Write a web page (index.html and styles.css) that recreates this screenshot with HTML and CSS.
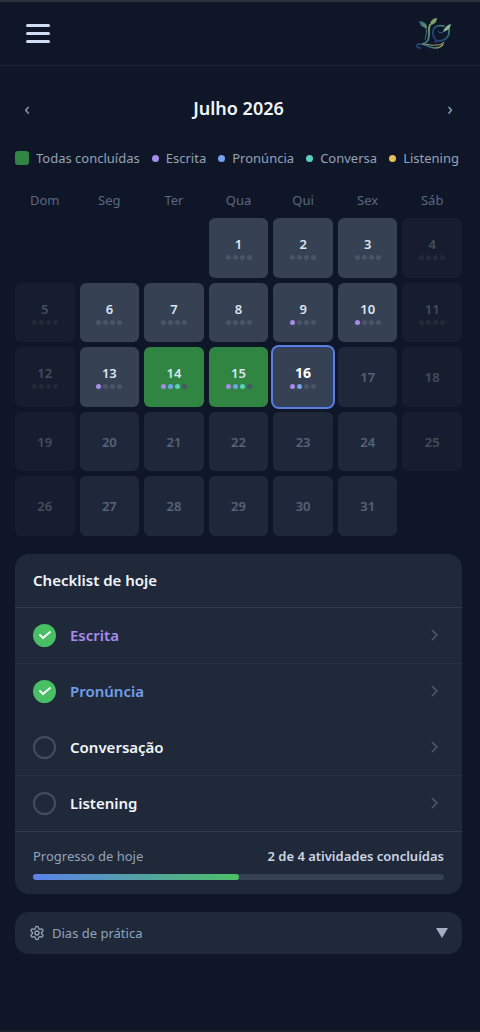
FILE: index.html
```html
<!DOCTYPE html>
<html lang="pt-BR">
<head>
  <meta charset="UTF-8">
  <meta name="viewport" content="width=device-width, initial-scale=1.0">
  <title>Calendário de prática</title>
  <link rel="stylesheet" href="styles.css">
</head>
<body>
  <header class="topbar">
    <button type="button" class="menu-btn" aria-label="Abrir menu">
      <span></span><span></span><span></span>
    </button>
    <a href="#" class="logo" aria-label="Início">
      <svg viewBox="0 0 36 34" width="36" height="34" fill="none" stroke-linecap="round" stroke-linejoin="round">
        <defs>
          <linearGradient id="leaf" x1="0" y1="0" x2="1" y2="1">
            <stop offset="0" stop-color="#2b5f7c"/>
            <stop offset="1" stop-color="#6b9a7c"/>
          </linearGradient>
          <linearGradient id="stem" x1="0" y1="0" x2="0" y2="1">
            <stop offset="0" stop-color="#7f9f6c"/>
            <stop offset="1" stop-color="#2c6a80"/>
          </linearGradient>
          <linearGradient id="root" x1="0" y1="0" x2="1" y2="0">
            <stop offset="0" stop-color="#27457f"/>
            <stop offset="0.5" stop-color="#35737f"/>
            <stop offset="1" stop-color="#b0a86c"/>
          </linearGradient>
          <linearGradient id="bubble" x1="0" y1="1" x2="1" y2="0">
            <stop offset="0" stop-color="#22367a"/>
            <stop offset="0.6" stop-color="#285f78"/>
            <stop offset="1" stop-color="#6b9a7c"/>
          </linearGradient>
        </defs>
        <path d="M11 11C8 11 4 9 3 4c5 0 8 3 8 7z" fill="url(#leaf)"/>
        <path d="M14 8c0-4 3-7 7-7 0 4-3 7-7 7z" fill="#7f9f6c"/>
        <path d="M14 8c-2 4-1 6-1 10 0 5-3 8-6 9" stroke="url(#stem)" stroke-width="2"/>
        <path d="M10 11c1 4 0 8-1 11" stroke="#3b7b83" stroke-width="1"/>
        <path d="M4 31c-4 0-4-4 0-4 6 0 9 4 15 4 4 0 7-2 8-4" stroke="url(#root)" stroke-width="1.6"/>
        <path d="M7 27c5 0 9 2 14 1 3 0 5-1 7-3" stroke="#a39f6b" stroke-width="1"/>
        <path d="M28 9c-5-1-10 0-11 5-1 4 1 7 3 9l-1 2 3-1c7 0 11-4 11-9 0-2 0-4 0-5" stroke="url(#bubble)" stroke-width="1.6"/>
        <path d="M27 15c1-4 4-7 8-8-1 5-4 7-8 8z" fill="#83b89a"/>
        <path d="M22 14l2 2 3-1" stroke="#2f5f9a" stroke-width="1"/>
      </svg>
    </a>
  </header>

  <main class="content">
    <div class="month-nav">
      <button type="button" class="nav-btn" aria-label="Mês anterior">‹</button>
      <h1>Julho 2026</h1>
      <button type="button" class="nav-btn" aria-label="Próximo mês">›</button>
    </div>

    <ul class="legend">
      <li><span class="swatch"></span>Todas concluídas</li>
      <li><span class="key escrita"></span>Escrita</li>
      <li><span class="key pronuncia"></span>Pronúncia</li>
      <li><span class="key conversa"></span>Conversa</li>
      <li><span class="key listening"></span>Listening</li>
    </ul>

    <div class="weekdays">
      <span>Dom</span><span>Seg</span><span>Ter</span><span>Qua</span><span>Qui</span><span>Sex</span><span>Sáb</span>
    </div>
    <div class="days" id="days"></div>

    <section class="card checklist">
      <h2>Checklist de hoje</h2>
      <ul>
        <li>
          <a href="#" class="task">
            <span class="check done"><svg viewBox="0 0 12 12" width="12" height="12"><path d="M1 6l3 3 7-6"/></svg></span>
            <span class="task-name text-escrita">Escrita</span>
            <svg class="chevron" viewBox="0 0 8 12" width="8" height="12"><path d="M1 1l5 5-5 5"/></svg>
          </a>
        </li>
        <li>
          <a href="#" class="task">
            <span class="check done"><svg viewBox="0 0 12 12" width="12" height="12"><path d="M1 6l3 3 7-6"/></svg></span>
            <span class="task-name text-pronuncia">Pronúncia</span>
            <svg class="chevron" viewBox="0 0 8 12" width="8" height="12"><path d="M1 1l5 5-5 5"/></svg>
          </a>
        </li>
        <li class="no-line">
          <a href="#" class="task">
            <span class="check"></span>
            <span class="task-name">Conversação</span>
            <svg class="chevron" viewBox="0 0 8 12" width="8" height="12"><path d="M1 1l5 5-5 5"/></svg>
          </a>
        </li>
        <li>
          <a href="#" class="task">
            <span class="check"></span>
            <span class="task-name">Listening</span>
            <svg class="chevron" viewBox="0 0 8 12" width="8" height="12"><path d="M1 1l5 5-5 5"/></svg>
          </a>
        </li>
      </ul>
      <div class="progress">
        <div class="progress-info">
          <span>Progresso de hoje</span>
          <strong>2 de 4 atividades concluídas</strong>
        </div>
        <div class="bar"><div class="bar-fill" style="width: 50%"></div></div>
      </div>
    </section>

    <button type="button" class="card practice">
      <svg class="gear" viewBox="0 0 24 24" width="16" height="16"><path d="M12.2 2h-.4a2 2 0 0 0-2 2v.2a2 2 0 0 1-1 1.7l-.4.3a2 2 0 0 1-2 0l-.2-.1a2 2 0 0 0-2.7.7l-.2.4a2 2 0 0 0 .7 2.7l.2.1a2 2 0 0 1 1 1.7v.5a2 2 0 0 1-1 1.8l-.2.1a2 2 0 0 0-.7 2.7l.2.4a2 2 0 0 0 2.7.7l.2-.1a2 2 0 0 1 2 0l.4.3a2 2 0 0 1 1 1.7v.2a2 2 0 0 0 2 2h.4a2 2 0 0 0 2-2v-.2a2 2 0 0 1 1-1.7l.4-.3a2 2 0 0 1 2 0l.2.1a2 2 0 0 0 2.7-.7l.2-.4a2 2 0 0 0-.7-2.7l-.2-.1a2 2 0 0 1-1-1.8v-.5a2 2 0 0 1 1-1.7l.2-.1a2 2 0 0 0 .7-2.7l-.2-.4a2 2 0 0 0-2.7-.7l-.2.1a2 2 0 0 1-2 0l-.4-.3a2 2 0 0 1-1-1.7V4a2 2 0 0 0-2-2z"/><circle cx="12" cy="12" r="3"/></svg>
      <span>Dias de prática</span>
      <svg class="caret" viewBox="0 0 12 10" width="12" height="10"><path d="M0 0h12L6 10z"/></svg>
    </button>
  </main>

  <script src="script.js"></script>
</body>
</html>
```
FILE: styles.css
```css
* {
  box-sizing: border-box;
}
body {
  margin: 0;
  min-height: 100vh;
  background-color: #0f1628;
  color: #f1f5f9;
  font-family: 'Noto Sans', 'Open Sans', sans-serif;
  font-size: 13px;
  border-top: 2px solid #2a333e;
  border-bottom: 2px solid #17222c;
}
h1, h2, ul {
  margin: 0;
  padding: 0;
}
ul {
  list-style: none;
}
button {
  font-family: inherit;
  border: none;
  background: none;
  padding: 0;
  cursor: pointer;
}
a {
  color: inherit;
  text-decoration: none;
}

/* topo */
.topbar {
  display: flex;
  justify-content: space-between;
  align-items: center;
  height: 64px;
  padding: 0 28px 0 26px;
  border-bottom: 1px solid #1e283a;
}
.menu-btn {
  display: flex;
  flex-direction: column;
  gap: 5px;
}
.menu-btn span {
  width: 24px;
  height: 3px;
  border-radius: 2px;
  background-color: #cfdcf2;
}
.logo svg {
  display: block;
}

.content {
  padding: 23px 18px 24px 15px;
}

/* mes */
.month-nav {
  display: flex;
  justify-content: space-between;
  align-items: center;
  height: 38px;
}
.month-nav h1 {
  font-size: 18px;
  font-weight: 600;
}
.nav-btn {
  width: 24px;
  height: 38px;
  color: #94a3b8;
  font-size: 18px;
}

/* legenda */
.legend {
  display: flex;
  justify-content: space-between;
  margin-top: 21px;
  padding-right: 3px;
  color: #94a3b8;
  line-height: 20px;
}
.legend li {
  display: flex;
  align-items: center;
  gap: 7px;
}
.swatch {
  width: 14px;
  height: 14px;
  border-radius: 3px;
  background-color: #2f8541;
}
.key {
  width: 7px;
  height: 7px;
  border-radius: 50%;
}

/* calendario */
.weekdays,
.days {
  display: grid;
  grid-template-columns: repeat(7, 1fr);
  gap: 5px;
}
.weekdays {
  margin-top: 22px;
  line-height: 20px;
  text-align: center;
  color: #5b6880;
}
.days {
  margin-top: 8px;
}
.day {
  display: flex;
  flex-direction: column;
  align-items: center;
  justify-content: center;
  gap: 2px;
  aspect-ratio: 1;
  border-radius: 6px;
  background-color: #364153;
  color: #dbe5f3;
  font-size: 13px;
  font-weight: 600;
  line-height: 18px;
}
.first {
  grid-column-start: 4;
}
.future {
  background-color: #1e283a;
  color: #586375;
}
.off {
  background-color: #161d2e;
  color: #454d5d;
}
.complete {
  background-color: #2f8541;
}
.today {
  color: #fff;
  font-size: 14px;
  font-weight: 700;
  box-shadow: 0 0 0 2px #5c7fdc, inset 0 0 0 1px #2f4176;
}
.dots {
  display: flex;
  gap: 2px;
}
.dot {
  width: 5px;
  height: 5px;
  border-radius: 50%;
  background-color: #4a5568;
}
.off .dot {
  background-color: #222a39;
}
.escrita {
  background-color: #a78bea;
}
.pronuncia {
  background-color: #72a4ec;
}
.conversa {
  background-color: #5cd0bc;
}
.listening {
  background-color: #e8bf55;
}

/* checklist */
.card {
  width: 100%;
  border-radius: 14px;
  background-color: #1f293a;
}
.checklist {
  margin-top: 18px;
}
.checklist h2 {
  padding: 0 18px;
  font-size: 15px;
  font-weight: 600;
  line-height: 53px;
}
.checklist li {
  border-top: 1px solid #263244;
}
.checklist li:first-child {
  border-color: #2e3a4d;
}
.checklist .no-line {
  border-color: transparent;
}
.task {
  display: flex;
  align-items: center;
  gap: 14px;
  height: 55px;
  padding: 0 23px 0 18px;
}
.check {
  display: flex;
  align-items: center;
  justify-content: center;
  width: 23px;
  height: 23px;
  border: 2px solid #434e61;
  border-radius: 50%;
}
.check.done {
  border: none;
  background-color: #48bf64;
}
.check path {
  fill: none;
  stroke: #fff;
  stroke-width: 1.8;
  stroke-linecap: round;
  stroke-linejoin: round;
}
.task-name {
  flex: 1;
  font-size: 15px;
  font-weight: 600;
}
.text-escrita {
  color: #a78bea;
}
.text-pronuncia {
  color: #729fea;
}
.chevron path {
  fill: none;
  stroke: #4b576a;
  stroke-width: 1.5;
}
.progress {
  padding: 14px 18px;
  border-top: 1px solid #2e3a4d;
}
.progress-info {
  display: flex;
  justify-content: space-between;
  line-height: 20px;
  color: #94a3b8;
}
.progress-info strong {
  font-weight: 600;
  color: #cbd5e6;
}
.bar {
  height: 6px;
  margin-top: 8px;
  border-radius: 3px;
  background-color: #364153;
}
.bar-fill {
  height: 100%;
  border-radius: 3px;
  background: linear-gradient(90deg, #5b82ea, #4cc065);
}

/* dias de pratica */
.practice {
  display: flex;
  align-items: center;
  gap: 7px;
  height: 42px;
  margin-top: 18px;
  padding: 0 14px;
  color: #94a3b8;
  font-size: 13px;
}
.practice span {
  flex: 1;
  text-align: left;
}
.gear {
  fill: none;
  stroke: currentColor;
  stroke-width: 2;
}
.caret {
  fill: #a3aec4;
}
```
FILE: script.js
```js
// atividades feitas por dia (na ordem: escrita, pronúncia, conversa, listening)
const kinds = ['escrita', 'pronuncia', 'conversa', 'listening'];
const progress = { 9: 1, 10: 1, 13: 1, 14: 3, 15: 3, 16: 2 };
const complete = [14, 15];
const today = 16;
const startCol = 3; // 1 de julho cai na quarta

const grid = document.getElementById('days');

for (let d = 1; d <= 31; d++) {
  const col = (startCol + d - 1) % 7;
  const cell = document.createElement('div');
  cell.className = 'day';
  if (d === 1) cell.classList.add('first');
  if (d > today) cell.classList.add('future');
  if (col === 0 || col === 6) cell.classList.add('off');
  if (complete.includes(d)) cell.classList.add('complete');
  if (d === today) cell.classList.add('today');

  const num = document.createElement('span');
  num.textContent = d;
  cell.appendChild(num);

  if (d <= today) {
    const dots = document.createElement('div');
    dots.className = 'dots';
    kinds.forEach((kind, i) => {
      const dot = document.createElement('span');
      dot.className = 'dot';
      if (i < (progress[d] || 0)) dot.classList.add(kind);
      dots.appendChild(dot);
    });
    cell.appendChild(dots);
  }
  grid.appendChild(cell);
}
```
